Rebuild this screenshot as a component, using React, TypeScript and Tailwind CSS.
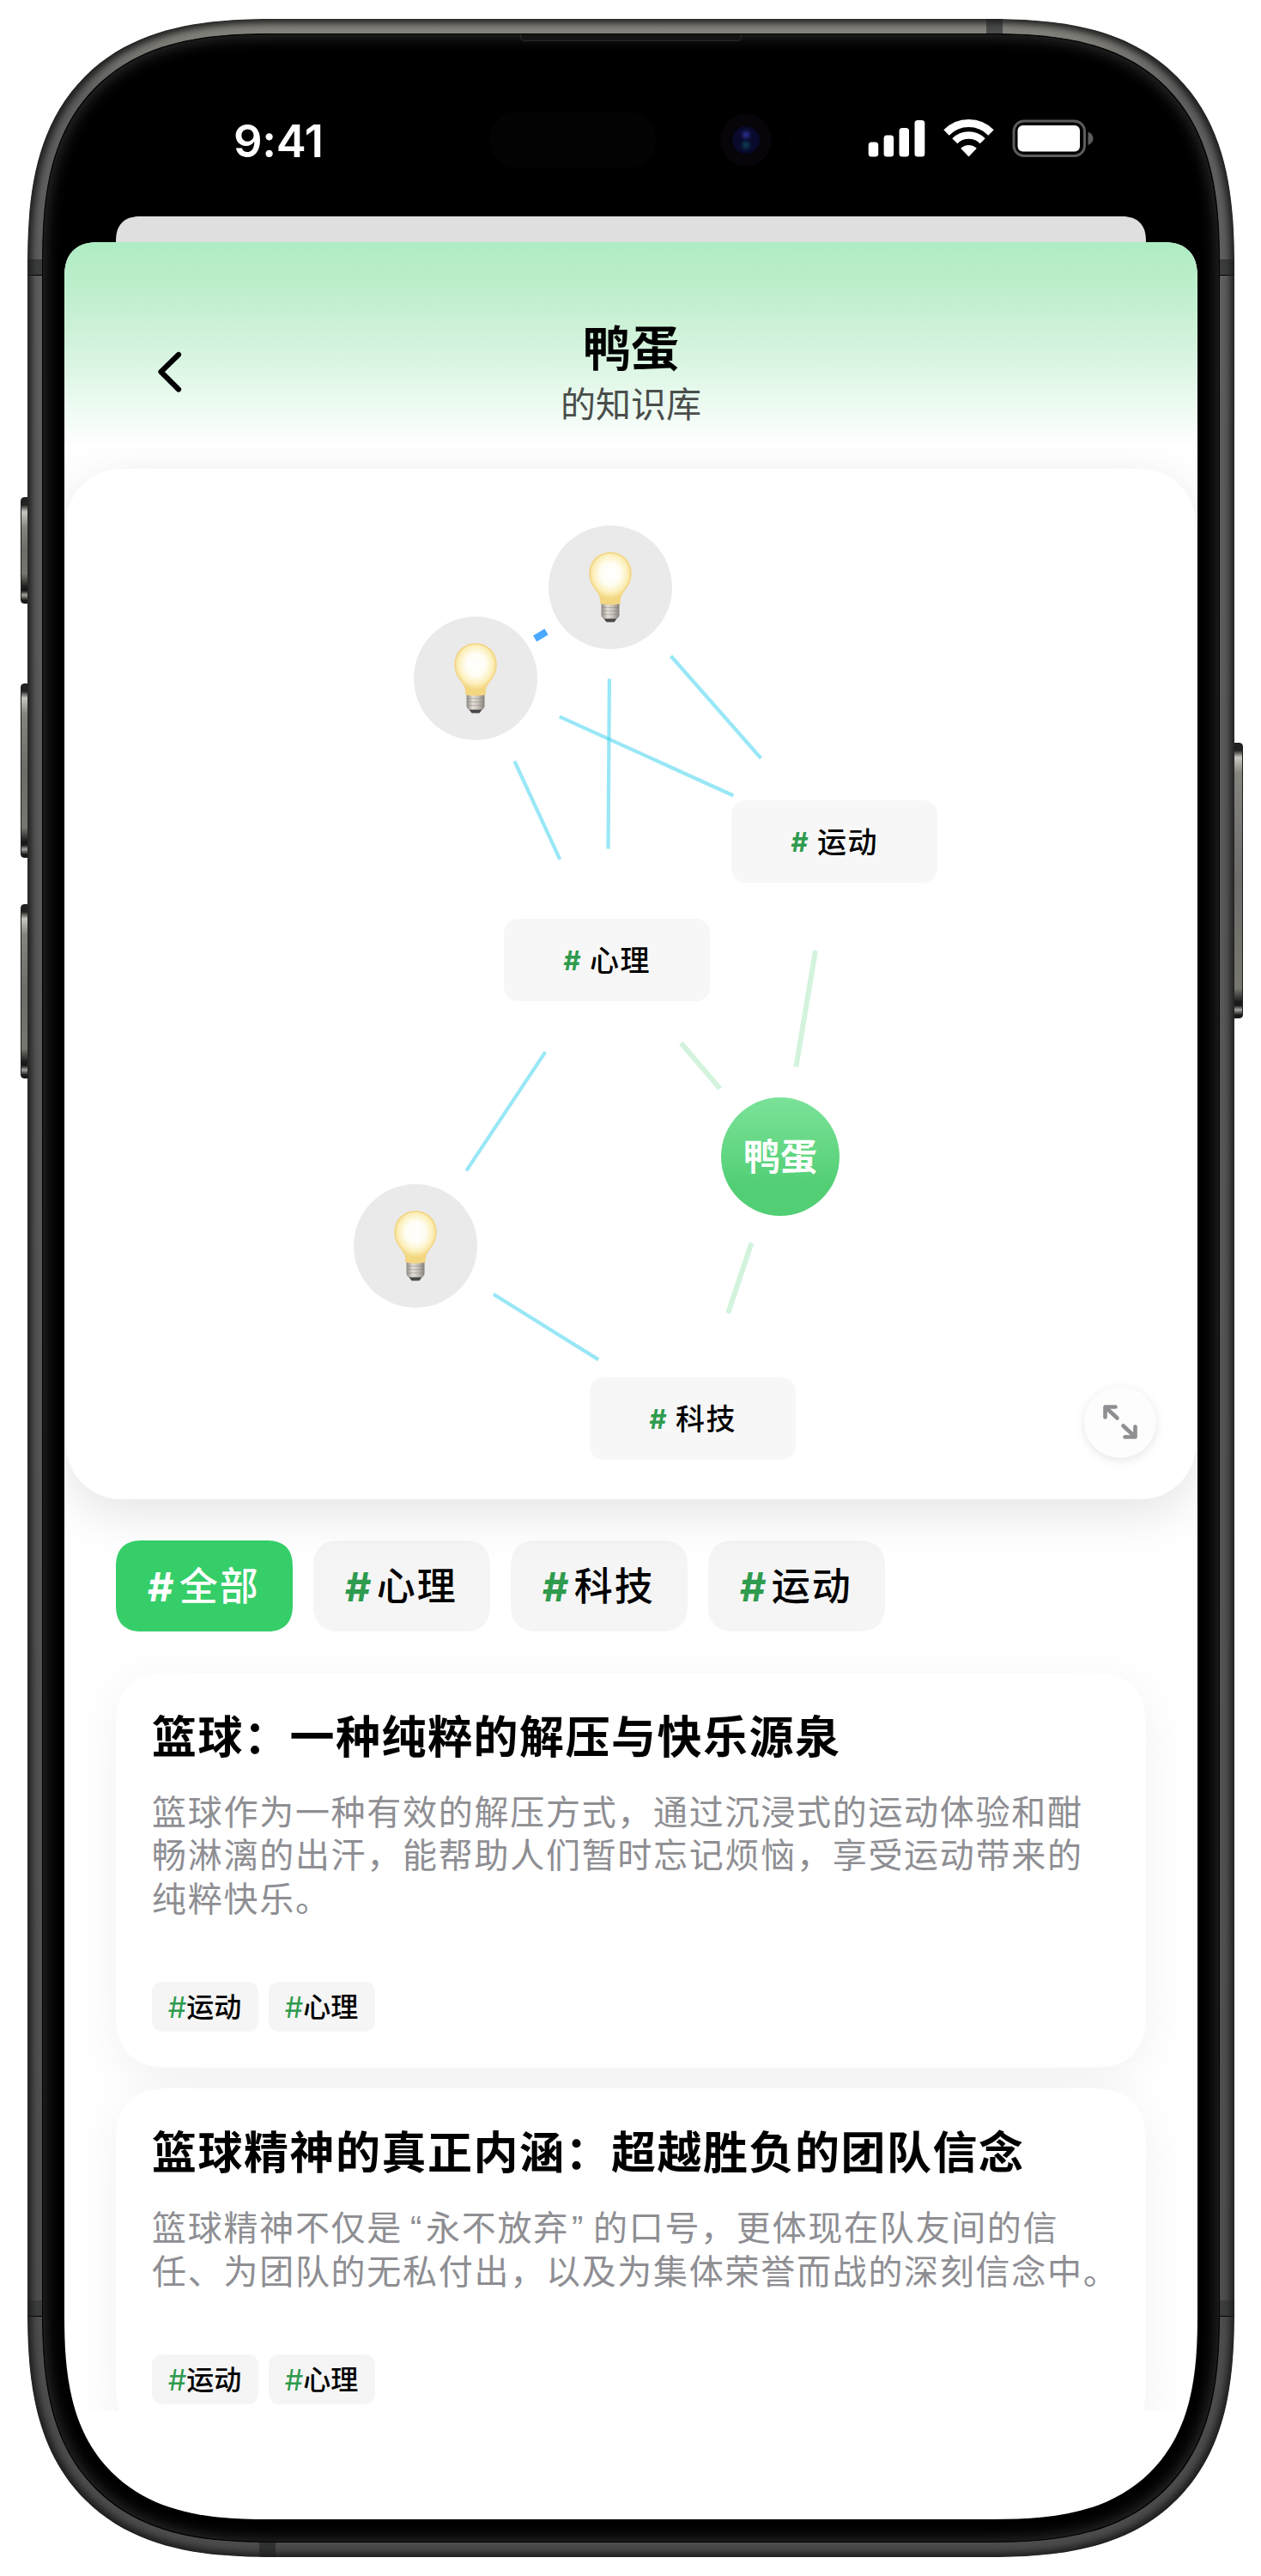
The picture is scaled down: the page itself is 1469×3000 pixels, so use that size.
import React from "react";

function Bulb({ id }: { id: string }) {
  return (
    <svg width="50" height="82" viewBox="0 0 50 82" fill="none">
      <defs>
        <radialGradient id={id + "g"} gradientUnits="userSpaceOnUse" cx="25" cy="26" r="26" gradientTransform="translate(0 -4) scale(1 1.12)">
          <stop offset="0" stopColor="#fff" />
          <stop offset="0.45" stopColor="#fffdf3" />
          <stop offset="0.75" stopColor="#fcf0bd" />
          <stop offset="1" stopColor="#f3d680" />
        </radialGradient>
        <linearGradient id={id + "s"} x1="0" y1="0" x2="1" y2="0">
          <stop offset="0" stopColor="#8f8b84" />
          <stop offset="0.35" stopColor="#e2ddd5" />
          <stop offset="0.65" stopColor="#c4bfb7" />
          <stop offset="1" stopColor="#85817b" />
        </linearGradient>
      </defs>
      <path d="M14.500 59 H35.500 V73 C35.500 76 33 77.500 31 79 L29.500 81 H20.500 L19 79 C17 77.500 14.500 76 14.500 73 Z" fill={"url(#" + id + "s)"} />
      <path d="M15 64.500 H35 M15 68.500 H35 M15.500 72.500 H34.500" stroke="#77736d" strokeOpacity="0.35" strokeWidth="1" />
      <path d="M17.500 77.500 H32.500 L29.500 81.500 H20.500 Z" fill="#484848" />
      <path d="M25 0.800 C38.500 0.800 49 11 49 25 C49 34 45.500 39 41.500 44 C37 49.500 36 53 36 59.500 C30 61 20 61 14 59.500 C14 53 13 49.500 8.500 44 C4.500 39 1 34 1 25 C1 11 11.500 0.800 25 0.800 Z" fill={"url(#" + id + "g)"} stroke="#f3d584" strokeWidth="1.500" />
    </svg>
  );
}

function IdeaNode({ id, className }: { id: string; className: string }) {
  return (
    <div className={"absolute flex size-[144px] items-center justify-center rounded-full bg-[#eaeaea] " + className}>
      <Bulb id={id} />
    </div>
  );
}

function TagNode({ label, className }: { label: string; className: string }) {
  return (
    <div className={"absolute flex h-[96px] w-[240px] items-center justify-center gap-[11px] rounded-[16px] bg-[#f7f7f7] pt-[2px] text-[34px] leading-[48px] font-medium " + className}>
      <span className="text-[31px] font-bold text-[#2f9b4e] italic">#</span>
      <span className="tracking-[1.500px]">{label}</span>
    </div>
  );
}

function Graph() {
  return (
    <section className="relative mx-[2px] h-[1200px] shrink-0 rounded-[64px] bg-white shadow-[0_16px_60px_rgba(0,0,0,0.11)]">
      <svg className="absolute inset-0" width="1316" height="1200" viewBox="77 546 1316 1200" fill="none">
        <g stroke="#33cfed" strokeOpacity="0.5" strokeWidth="4.200">
          <path d="M781.600 764 886.400 883" />
          <path d="M709.900 790.600 708.500 988.600" />
          <path d="M651.800 834.700 854.300 926.500" />
          <path d="M599.400 886.500 652.300 1000.800" />
          <path d="M635.300 1225.200 543.300 1363.300" />
          <path d="M574.900 1507.200 697.100 1583.400" />
        </g>
        <g stroke="#d3f3dd" strokeWidth="6">
          <path d="M793.400 1214.800 838.700 1267.600" />
          <path d="M950 1107 927.400 1242.400" />
          <path d="M875.500 1447.500 848.100 1529.400" />
        </g>
        <path d="M623.200 743.800 636.500 735.800" stroke="#4aa8ff" strokeWidth="8" />
      </svg>
      <IdeaNode id="b1" className="top-[66px] left-[562px]" />
      <IdeaNode id="b2" className="top-[172px] left-[405px]" />
      <IdeaNode id="b3" className="top-[833px] left-[335px]" />
      <TagNode label="运动" className="top-[386px] left-[775px]" />
      <TagNode label="心理" className="top-[524px] left-[510px]" />
      <TagNode label="科技" className="top-[1058px] left-[610px]" />
      <div className="absolute top-[732px] left-[763px] flex size-[138px] items-center justify-center rounded-full bg-linear-to-b from-[#7be299] to-[#52cf75] to-75% text-[43px] font-bold text-white">
        鸭蛋
      </div>
      <button className="absolute right-[46px] bottom-[48px] flex size-[84px] items-center justify-center rounded-full bg-[#fdfdfd] shadow-[0_3px_12px_rgba(0,0,0,0.1)]">
        <svg width="42" height="42" viewBox="0 0 42 42" fill="none" stroke="#8e8e93" strokeWidth="4.600" strokeLinecap="round" strokeLinejoin="round">
          <path d="M15.500 3.500 H3.500 V15.500 M4 4 17.500 16.500" />
          <path d="M26.500 38.500 H38.500 V26.500 M38 38 24.500 25.500" />
        </svg>
      </button>
    </section>
  );
}

function StatusBar() {
  return (
    <div className="relative flex h-[186px] items-start justify-between pr-[121px] pl-[197px]">
      <div className="pt-[67px] font-['Inter'] text-[52.500px] leading-[62px] font-semibold tracking-[-0.300px] text-white">9:41</div>
      <svg className="mt-[73px]" width="263" height="44" viewBox="1011 139 263 44" fill="none">
        <g fill="#fff">
          <rect x="1011.700" y="165.500" width="11.500" height="17" rx="3.500" />
          <rect x="1029.600" y="157.500" width="11.500" height="25" rx="3.500" />
          <rect x="1047.500" y="149" width="11.500" height="33.500" rx="3.500" />
          <rect x="1065.500" y="140" width="11.800" height="42.500" rx="3.500" />
        </g>
        <g stroke="#fff">
          <path d="M1102.500 154.500 A36.500 36.500 0 0 1 1154.500 154.500" strokeWidth="9" />
          <path d="M1112.300 164.300 A22.800 22.800 0 0 1 1144.700 164.300" strokeWidth="8.500" />
        </g>
        <path d="M1128.500 182.500 L1119.200 172.800 A13.200 13.200 0 0 1 1137.800 172.800 Z" fill="#fff" />
        <rect x="1181" y="141" width="82.500" height="40.500" rx="12" stroke="#5c5c5c" strokeWidth="3" />
        <rect x="1185.500" y="146" width="72.500" height="30.500" rx="6" fill="#fff" />
        <path d="M1267.500 153.500 C1271.500 155 1273.500 158 1273.500 161.300 C1273.500 164.500 1271.500 167.500 1267.500 169 Z" fill="#5c5c5c" />
      </svg>
      <div className="absolute top-[43px] left-[473px] flex h-[108px] w-[374px] items-center justify-between rounded-full border border-[#040404] bg-black pr-[22px] pl-[21px]">
        <div className="h-[66px] w-[194px] rounded-full bg-[#030303]" />
        <div className="flex size-[60px] items-center justify-center rounded-full bg-[#07040a]">
          <div className="flex size-[32px] flex-col items-center justify-center gap-[4px] rounded-full bg-[#090a2b]">
            <div className="size-[8px] rounded-full bg-[#30339a] blur-[2px]" />
            <div className="size-[8px] rounded-full bg-[#0d4455] blur-[2px]" />
          </div>
        </div>
      </div>
    </div>
  );
}

function Chip({ label, active }: { label: string; active?: boolean }) {
  return (
    <button
      className={
        "flex h-[106px] w-[206px] items-center justify-center gap-[7px] rounded-[26px] pt-[2px] text-[45px] leading-[60px] supports-[corner-shape:round]:rounded-[32px] [corner-shape:superellipse(1.35)] " +
        (active ? "bg-[#36ce69] text-white" : "bg-black/4 text-black")
      }
    >
      <span className={"-ml-[2px] text-[47px] font-bold italic " + (active ? "text-white" : "text-[#2f9b4e]")}>#</span>
      <span className="font-medium tracking-[2px]">{label}</span>
    </button>
  );
}

function SmallTag({ label }: { label: string }) {
  return (
    <span className="flex h-[58px] w-[124px] items-center justify-center rounded-[12px] bg-[#f5f5f5] pt-px text-[32px] leading-[40px]">
      <span className="-ml-px text-[34px] text-[#2f9b4e]">#</span>
      <span className="font-medium">{label}</span>
    </span>
  );
}

function NoteCard({ title, lines }: { title: string; lines: React.ReactNode[] }) {
  return (
    <article className="rounded-[54px] bg-white p-[42px] shadow-[0_12px_60px_rgba(0,0,0,0.06)] supports-[corner-shape:round]:rounded-[64px] [corner-shape:superellipse(1.35)]">
      <h2 className="pt-[2px] text-[52px] leading-[64px] font-bold tracking-[1.500px] whitespace-nowrap">{title}</h2>
      <div className="mt-[30px] text-[40px] leading-[50.400px] tracking-[1.720px] whitespace-nowrap text-[#8e8e93]">
        {lines.map((line, i) => (
          <p key={i}>{line}</p>
        ))}
      </div>
      <div className="mt-[71px] flex gap-3">
        <SmallTag label="运动" />
        <SmallTag label="心理" />
      </div>
    </article>
  );
}

function SideButton({ className }: { className: string }) {
  return (
    <div className={"absolute w-[14px] rounded-[4px] border border-[#1c1c1c] bg-[linear-gradient(to_bottom,#222_0,#222_8px,#c9c7c0_16px,#85847f_34px,#6d6c69_50%,#77766f_calc(100%-34px),#1a1a1a_calc(100%-18px),#1a1a1a_calc(100%-14px),#a5a49e_calc(100%-9px),#1a1a1a_calc(100%-3px))] " + className} />
  );
}

export default function App() {
  return (
    <div className="h-[3000px] w-[1469px] overflow-hidden bg-white px-[32px] pt-[22px] pr-[31px] font-['Inter','Noto_Sans_CJK_SC',sans-serif] text-black">
      <div className="relative h-[2956px]">
        <SideButton className="top-[557px] -left-[8px] h-[124px]" />
        <SideButton className="top-[774px] -left-[8px] h-[203px]" />
        <SideButton className="top-[1031px] -left-[8px] h-[203px]" />
        <SideButton className="top-[843px] -right-[10px] h-[321px]" />
        <div className="relative h-full overflow-hidden rounded-[229px] bg-linear-to-b from-[#8a8981] via-[#606060] via-3% to-[#4c4c4c] p-[17px] supports-[corner-shape:round]:rounded-[290px] [corner-shape:superellipse(1.4)]">
          <div className="absolute top-[280px] left-0 h-[19px] w-full border-b border-black bg-[#3c3e3e]" />
          <div className="absolute bottom-[280px] left-0 h-[19px] w-full border-b border-black bg-[#3c3e3e]" />
          <div className="absolute top-0 right-[270px] h-[40px] w-[19px] bg-[#4a4c4c]" />
          <div className="absolute bottom-0 left-[270px] h-[40px] w-[19px] bg-[#303232]" />
          <div className="absolute inset-0 rounded-[229px] shadow-[inset_0_0_9px_5px_#1e1e1e] supports-[corner-shape:round]:rounded-[290px] [corner-shape:superellipse(1.4)]" />
          <div className="relative h-full rounded-[212px] border border-black bg-black px-[25px] pt-[26px] pb-[26px] shadow-[inset_0_0_18px_2px_#303030] supports-[corner-shape:round]:rounded-[270px] [corner-shape:superellipse(1.4)]">
            <div className="absolute top-0 left-1/2 h-[8px] w-[258px] -translate-x-1/2 rounded-b-[5px] border border-t-0 border-[#2c2c2c] bg-[#141414]" />
            <main className="flex h-full flex-col overflow-hidden rounded-[186px] bg-black supports-[corner-shape:round]:rounded-[238px] [corner-shape:superellipse(1.4)]">
              <StatusBar />
              <div className="mx-[60px] h-[30px] shrink-0 rounded-t-[30px] bg-[#dfdfdf] supports-[corner-shape:round]:rounded-t-[38px] [corner-shape:superellipse(1.35)]" />
              <div className="flex min-h-0 flex-1 flex-col overflow-hidden rounded-t-[34px] bg-white supports-[corner-shape:round]:rounded-t-[42px] [corner-shape:superellipse(1.35)]">
                <header className="grid h-[240px] shrink-0 grid-cols-[1fr_auto_1fr] items-start bg-[linear-gradient(to_bottom,#aeecc2_0%,#bceecb_20%,#d4f3dd_51%,#e9faef_76%,#fff_100%)] pt-[94px]">
                  <button className="ml-[109px] pt-[33px]" aria-label="返回">
                    <svg width="28" height="48" viewBox="0 0 28 48" fill="none" stroke="#000" strokeWidth="6.200" strokeLinecap="round" strokeLinejoin="round">
                      <path d="M24 4 L3.500 24 L24 44.500" />
                    </svg>
                  </button>
                  <div className="flex flex-col items-center">
                    <h1 className="text-[56px] leading-[60px] font-bold">鸭蛋</h1>
                    <p className="mt-[5px] text-[41px] leading-[60px] text-[#4a4e4b]">的知识库</p>
                  </div>
                </header>
                <div className="flex h-[2286px] shrink-0 flex-col overflow-hidden pt-[24px]">
                  <Graph />
                  <nav className="relative flex shrink-0 gap-6 px-[60px] pt-[48px]">
                    <Chip label="全部" active />
                    <Chip label="心理" />
                    <Chip label="科技" />
                    <Chip label="运动" />
                  </nav>
                  <div className="mx-[60px] mt-[48px] flex flex-col gap-6">
                    <NoteCard
                      title="篮球：一种纯粹的解压与快乐源泉"
                      lines={[
                        "篮球作为一种有效的解压方式，通过沉浸式的运动体验和酣",
                        "畅淋漓的出汗，能帮助人们暂时忘记烦恼，享受运动带来的",
                        "纯粹快乐。",
                      ]}
                    />
                    <NoteCard
                      title="篮球精神的真正内涵：超越胜负的团队信念"
                      lines={[
                        <>
                          篮球精神不仅是<span className="inline-block w-[27px] pl-[9px] font-['Liberation_Sans'] leading-none">“</span>永不放弃<span className="inline-block w-[28px] pl-[3px] font-['Liberation_Sans'] leading-none">”</span>的口号，更体现在队友间的信
                        </>,
                        "任、为团队的无私付出，以及为集体荣誉而战的深刻信念中。",
                      ]}
                    />
                  </div>
                </div>
              </div>
            </main>
          </div>
        </div>
      </div>
    </div>
  );
}
